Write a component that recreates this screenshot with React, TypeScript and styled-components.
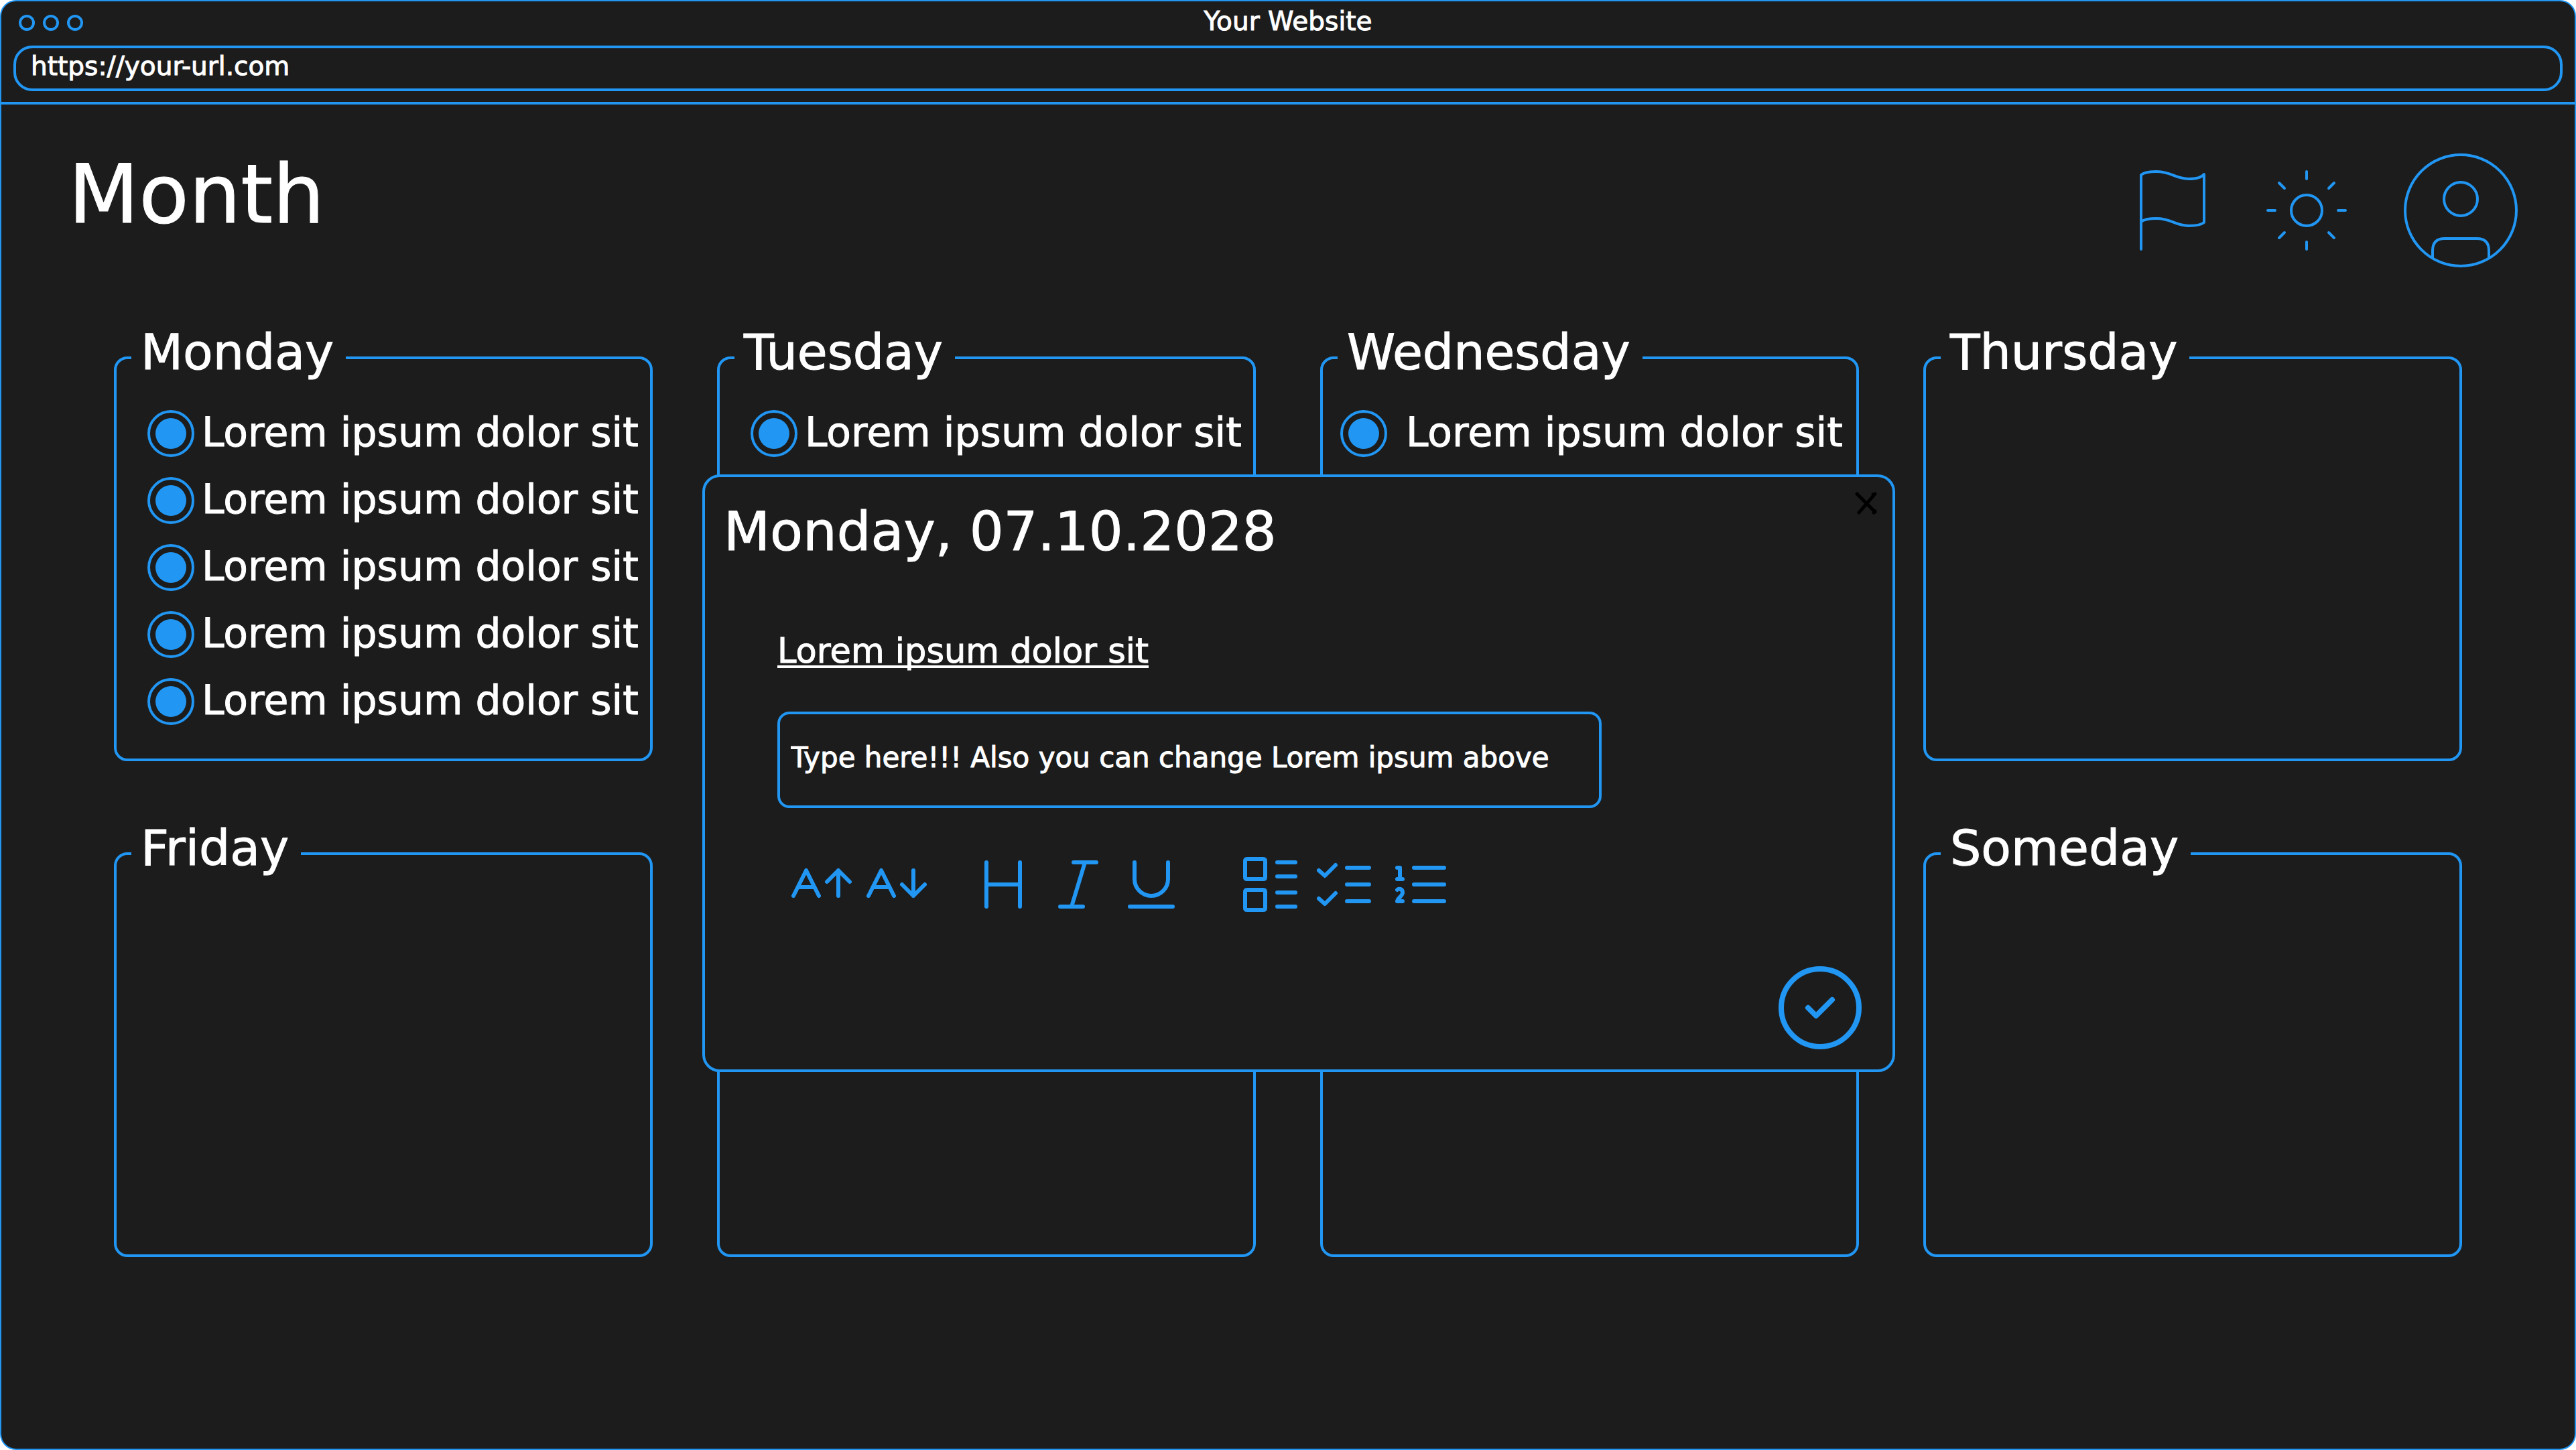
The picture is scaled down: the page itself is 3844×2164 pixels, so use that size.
import React, { useState } from "react";
import styled, { createGlobalStyle } from "styled-components";

const color = { accent: "#2196f3", surface: "#1c1c1c", text: "#ffffff" };
const fontStack = '"DejaVu Sans", Verdana, sans-serif';

const GlobalStyle = createGlobalStyle`
  *, *::before, *::after { box-sizing: border-box; }
  body {
    margin: 0;
    background: #ffffff;
    font-family: ${fontStack};
    color: ${color.text};
    -webkit-text-stroke: 1px currentColor;
  }
  h1, h2, h3, ul, p { margin: 0; padding: 0; font-weight: 400; }
  input, button { font-family: inherit; color: inherit; }
`;

const BrowserFrame = styled.div`
  position: relative;
  min-height: 100vh;
  border: 2px solid ${color.accent};
  border-radius: 24px;
  background: ${color.surface};
`;

const BrowserBar = styled.header`
  padding: 0 18px 16px;
  border-bottom: 4px solid ${color.accent};
`;

const TitleRow = styled.div`
  display: grid;
  grid-template-columns: 1fr auto 1fr;
  align-items: center;
  height: 66px;
  padding: 0 8px 2px;
`;

const WindowDots = styled.div`
  display: flex;
  gap: 12px;
`;

const Dot = styled.span`
  width: 24px;
  height: 24px;
  border: 4px solid ${color.accent};
  border-radius: 50%;
`;

const SiteTitle = styled.p`
  font-size: 39px;
  line-height: 44px;
  padding-bottom: 4px;
`;

const UrlField = styled.input`
  display: block;
  width: 100%;
  height: 68px;
  padding: 0 22px 8px;
  border: 4px solid ${color.accent};
  border-radius: 28px;
  background: transparent;
  font-size: 39px;
`;

const PageHeader = styled.div`
  display: flex;
  justify-content: space-between;
  align-items: flex-start;
  padding: 68px 80px 0 100px;
`;

const PageTitle = styled.h1`
  font-size: 122px;
  line-height: 132px;
`;

const HeaderActions = styled.nav`
  display: flex;
  align-items: center;
  gap: 80px;
`;

const IconButton = styled.button<{ $size: number }>`
  display: block;
  width: ${(p) => p.$size}px;
  height: ${(p) => p.$size}px;
  padding: 0;
  border: 0;
  background: none;
  cursor: pointer;
`;

const Glyph = styled.svg<{ $weight?: number }>`
  display: block;
  width: 100%;
  height: 100%;
  fill: none;
  stroke: ${color.accent};
  stroke-width: ${(p) => p.$weight ?? 4};
  stroke-linecap: round;
  stroke-linejoin: round;
`;

const WeekGrid = styled.main`
  display: grid;
  grid-template-columns: repeat(4, 1fr);
  gap: 88px 96px;
  padding: 80px 168px 96px;
`;

const DayCard = styled.fieldset`
  min-width: 0;
  min-height: 652px;
  margin: 0;
  padding: 0 22px;
  border: 4px solid ${color.accent};
  border-radius: 20px;
`;

const DayName = styled.legend`
  padding: 0 18px 16px 14px;
  font-size: 73px;
  line-height: 84px;
`;

const TaskList = styled.ul<{ $outdent: boolean }>`
  display: flex;
  flex-direction: column;
  gap: 30px;
  padding: 28px 0 0 ${(p) => (p.$outdent ? 4 : 24)}px;
  list-style: none;
`;

const TaskRow = styled.label<{ $gap: number }>`
  display: flex;
  align-items: center;
  gap: ${(p) => p.$gap}px;
  height: 70px;
  font-size: 60px;
  line-height: 68px;
  white-space: nowrap;
`;

const TaskCheck = styled.input`
  appearance: none;
  flex: none;
  width: 70px;
  height: 70px;
  margin: 0;
  padding: 8px;
  border: 4px solid ${color.accent};
  border-radius: 50%;
  background-clip: content-box;
  &:checked { background-color: ${color.accent}; }
`;

const TaskText = styled.span`
  padding-bottom: 4px;
`;

const Modal = styled.section`
  position: absolute;
  top: 706px;
  left: calc(50% - 874px);
  width: 1780px;
  padding: 36px 28px 30px;
  border: 4px solid ${color.accent};
  border-radius: 26px;
  background: ${color.surface};
`;

const ModalTitle = styled.h2`
  font-size: 80px;
  line-height: 92px;
`;

const CloseButton = styled.button`
  position: absolute;
  top: 20px;
  right: 18px;
  width: 40px;
  height: 40px;
  padding: 0;
  border: 0;
  background: none;
  cursor: pointer;
`;

const CloseGlyph = styled(Glyph)`
  stroke: #000000;
`;

const ModalBody = styled.div`
  padding: 102px 0 0 80px;
`;

const EntryTitle = styled.h3`
  font-size: 51px;
  line-height: 60px;
  text-decoration: underline;
  text-decoration-thickness: 4px;
  text-underline-offset: 4px;
  text-decoration-skip-ink: none;
`;

const EntryInput = styled.input`
  display: block;
  width: 1230px;
  max-width: 100%;
  height: 144px;
  margin-top: 60px;
  padding: 0 16px 8px;
  border: 4px solid ${color.accent};
  border-radius: 18px;
  background: transparent;
  font-size: 42px;
`;

const Toolbar = styled.div`
  display: flex;
  gap: 64px;
  padding: 64px 0 0 16px;
`;

const ToolGroup = styled.div`
  display: flex;
  gap: 12px;
`;

const ModalFooter = styled.div`
  display: flex;
  justify-content: flex-end;
  padding: 72px 18px 0 0;
`;

const ConfirmButton = styled.button`
  width: 124px;
  height: 124px;
  padding: 0;
  border: 8px solid ${color.accent};
  border-radius: 50%;
  background: transparent;
  cursor: pointer;
`;

const FlagIcon = () => (
  <Glyph viewBox="0 0 120 120" aria-hidden="true">
    <path d="M13 118V7C18 3 27 2 36 2C58 2 64 13 84 13C96 13 104 10 107 6V78C102 82 92 83 84 83C64 83 58 72 36 72C27 72 18 73 13 77" />
  </Glyph>
);

const SunIcon = () => (
  <Glyph viewBox="0 0 120 120" aria-hidden="true">
    <circle cx="60" cy="60" r="23" />
    <path d="M60 2V13M60 107V118M2 60H13M107 60H118M19 19L27 27M93 93L101 101M101 19L93 27M27 93L19 101" />
  </Glyph>
);

const AvatarIcon = () => (
  <Glyph viewBox="0 0 180 180" aria-hidden="true">
    <circle cx="90" cy="90" r="83" />
    <circle cx="90" cy="73" r="25" />
    <path d="M48 161V150Q48 132 66 132H114Q132 132 132 150V161" />
  </Glyph>
);

const toolGroups = [
  [
    { name: "Increase text size", path: "M8 67L27 29L46 67M15 54H39M75 67V29M58 46L75 29L92 46" },
    { name: "Decrease text size", path: "M8 67L27 29L46 67M15 54H39M75 29V67M58 50L75 67L92 50" },
  ],
  [
    { name: "Heading", path: "M20 17V83M70 17V83M20 50H70" },
    { name: "Italic", path: "M38 17H72M18 83H52M55 17L35 83" },
    { name: "Underline", path: "M17 17V42A25 25 0 0 0 67 42V17M10 83H74" },
  ],
  [
    {
      name: "Card list",
      path: "M21 12H45Q48 12 48 15V39Q48 42 45 42H21Q18 42 18 39V15Q18 12 21 12ZM21 58H45Q48 58 48 61V85Q48 88 45 88H21Q18 88 18 85V61Q18 58 21 58ZM66 17H93M66 38H93M66 62H93M66 83H93",
    },
    { name: "Checklist", path: "M16 29L25 37L41 21M16 71L25 79L41 63M58 25H91M58 50H91M58 75H91" },
    {
      name: "Numbered list",
      path: "M21 25H25V42M21 42H29M21 58C23 56 29 56 29 62C29 67 22 70 21 75H29M46 25H91M46 50H91M46 75H91",
    },
  ],
];

const task = "Lorem ipsum dolor sit";
const days = [
  { name: "Monday", tasks: [task, task, task, task, task] },
  { name: "Tuesday", tasks: [task] },
  { name: "Wednesday", tasks: [task], outdent: true },
  { name: "Thursday", tasks: [] },
  { name: "Friday", tasks: [] },
  { name: "", tasks: [] },
  { name: "", tasks: [] },
  { name: "Someday", tasks: [] },
];

function Day({ name, tasks, outdent = false }: { name: string; tasks: string[]; outdent?: boolean }) {
  return (
    <DayCard>
      <DayName>{name || "\u00a0"}</DayName>
      {tasks.length > 0 && (
        <TaskList $outdent={outdent}>
          {tasks.map((text, i) => (
            <li key={i}>
              <TaskRow $gap={outdent ? 28 : 11}>
                <TaskCheck type="checkbox" defaultChecked />
                <TaskText>{text}</TaskText>
              </TaskRow>
            </li>
          ))}
        </TaskList>
      )}
    </DayCard>
  );
}

function EntryDialog({ onClose }: { onClose: () => void }) {
  return (
    <Modal role="dialog" aria-labelledby="entry-date">
      <ModalTitle id="entry-date">Monday, 07.10.2028</ModalTitle>
      <CloseButton type="button" aria-label="Close" onClick={onClose}>
        <CloseGlyph viewBox="0 0 40 40" $weight={5} aria-hidden="true">
          <path d="M5 5L32 32M31 6L8 33M29 6L32 5M32 31L30 33" />
        </CloseGlyph>
      </CloseButton>
      <ModalBody>
        <EntryTitle id="entry-title">{task}</EntryTitle>
        <EntryInput
          type="text"
          aria-labelledby="entry-title"
          defaultValue="Type here!!! Also you can change Lorem ipsum above"
        />
        <Toolbar role="toolbar" aria-label="Formatting">
          {toolGroups.map((group, i) => (
            <ToolGroup key={i}>
              {group.map((tool) => (
                <IconButton key={tool.name} type="button" aria-label={tool.name} $size={100}>
                  <Glyph viewBox="0 0 100 100" $weight={6} aria-hidden="true">
                    <path d={tool.path} />
                  </Glyph>
                </IconButton>
              ))}
            </ToolGroup>
          ))}
        </Toolbar>
      </ModalBody>
      <ModalFooter>
        <ConfirmButton type="button" aria-label="Save" onClick={onClose}>
          <Glyph viewBox="0 0 108 108" $weight={8} aria-hidden="true">
            <path d="M36 54L48 66L72 42" />
          </Glyph>
        </ConfirmButton>
      </ModalFooter>
    </Modal>
  );
}

export default function App() {
  const [open, setOpen] = useState(true);
  return (
    <>
      <GlobalStyle />
      <BrowserFrame>
        <BrowserBar>
          <TitleRow>
            <WindowDots>
              <Dot />
              <Dot />
              <Dot />
            </WindowDots>
            <SiteTitle>Your Website</SiteTitle>
          </TitleRow>
          <UrlField type="text" aria-label="Address" defaultValue="https://your-url.com" />
        </BrowserBar>
        <PageHeader>
          <PageTitle>Month</PageTitle>
          <HeaderActions aria-label="Account">
            <IconButton type="button" aria-label="Flags" $size={120}>
              <FlagIcon />
            </IconButton>
            <IconButton type="button" aria-label="Theme" $size={120}>
              <SunIcon />
            </IconButton>
            <IconButton type="button" aria-label="Profile" $size={180}>
              <AvatarIcon />
            </IconButton>
          </HeaderActions>
        </PageHeader>
        <WeekGrid>
          {days.map((day, i) => (
            <Day key={i} {...day} />
          ))}
        </WeekGrid>
        {open && <EntryDialog onClose={() => setOpen(false)} />}
      </BrowserFrame>
    </>
  );
}
